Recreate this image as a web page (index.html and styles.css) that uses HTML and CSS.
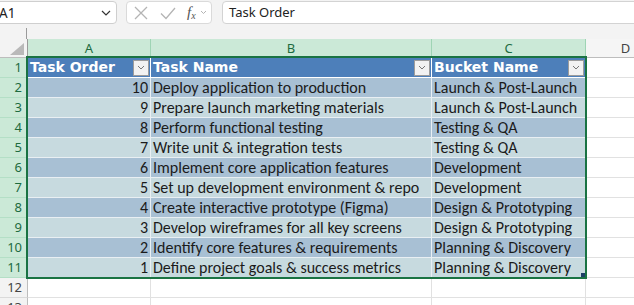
FILE: index.html
```html
<!DOCTYPE html>
<html>
<head>
<meta charset="utf-8">
<link rel="stylesheet" href="styles.css">
</head>
<body>
<div class="app">
  <div class="fbar">
    <div class="namebox">
      <span class="nb-text">A1</span>
      <svg class="nb-chev" width="10" height="6" viewBox="0 0 10 6"><path d="M1 1 L5 5 L9 1" fill="none" stroke="#333" stroke-width="1.2"/></svg>
    </div>
    <div class="fxbox">
      <svg width="16" height="16" viewBox="0 0 16 16"><path d="M2 2 L14 14 M14 2 L2 14" stroke="#b4b4b4" stroke-width="1.3" fill="none"/></svg>
      <svg width="18" height="16" viewBox="0 0 18 16"><path d="M2 8.5 L7 13.5 L16 3" stroke="#b4b4b4" stroke-width="1.3" fill="none"/></svg>
      <span class="fx">f<sub>x</sub></span>
      <svg width="7" height="5" viewBox="0 0 7 5"><path d="M1 1 L3.5 3.5 L6 1" stroke="#b4b4b4" stroke-width="1" fill="none"/></svg>
    </div>
    <div class="finput">Task Order</div>
  </div>
  <div class="strip"><div class="strip-corner"></div></div>
  <div class="sheet">
    <div class="corner"><svg width="14" height="12" viewBox="0 0 14 12"><path d="M14 0 L14 12 L0 12 Z" fill="#b9b9b9"/></svg></div>
    <div class="ch sel">A</div>
    <div class="ch sel">B</div>
    <div class="ch sel">C</div>
    <div class="ch">D</div>

    <div class="rh sel">1</div>
    <div class="c th"><span>Task Order</span><span class="dd"><svg width="8" height="5" viewBox="0 0 8 5"><path d="M1 1 L4 4 L7 1" stroke="#777" stroke-width="1" fill="none"/></svg></span></div>
    <div class="c th"><span>Task Name</span><span class="dd"><svg width="8" height="5" viewBox="0 0 8 5"><path d="M1 1 L4 4 L7 1" stroke="#777" stroke-width="1" fill="none"/></svg></span></div>
    <div class="c th"><span>Bucket Name</span><span class="dd"><svg width="8" height="5" viewBox="0 0 8 5"><path d="M1 1 L4 4 L7 1" stroke="#777" stroke-width="1" fill="none"/></svg></span></div>
    <div class="c e"></div>

    <div class="rh sel">2</div>
    <div class="c b1 num">10</div><div class="c b1">Deploy application to production</div><div class="c b1">Launch &amp; Post-Launch</div><div class="c e"></div>
    <div class="rh sel">3</div>
    <div class="c b2 num">9</div><div class="c b2">Prepare launch marketing materials</div><div class="c b2">Launch &amp; Post-Launch</div><div class="c e"></div>
    <div class="rh sel">4</div>
    <div class="c b1 num">8</div><div class="c b1">Perform functional testing</div><div class="c b1">Testing &amp; QA</div><div class="c e"></div>
    <div class="rh sel">5</div>
    <div class="c b2 num">7</div><div class="c b2">Write unit &amp; integration tests</div><div class="c b2">Testing &amp; QA</div><div class="c e"></div>
    <div class="rh sel">6</div>
    <div class="c b1 num">6</div><div class="c b1">Implement core application features</div><div class="c b1">Development</div><div class="c e"></div>
    <div class="rh sel">7</div>
    <div class="c b2 num">5</div><div class="c b2">Set up development environment &amp; repo</div><div class="c b2">Development</div><div class="c e"></div>
    <div class="rh sel">8</div>
    <div class="c b1 num">4</div><div class="c b1">Create interactive prototype (Figma)</div><div class="c b1">Design &amp; Prototyping</div><div class="c e"></div>
    <div class="rh sel">9</div>
    <div class="c b2 num">3</div><div class="c b2">Develop wireframes for all key screens</div><div class="c b2">Design &amp; Prototyping</div><div class="c e"></div>
    <div class="rh sel">10</div>
    <div class="c b1 num">2</div><div class="c b1">Identify core features &amp; requirements</div><div class="c b1">Planning &amp; Discovery</div><div class="c e"></div>
    <div class="rh sel">11</div>
    <div class="c b2 num">1</div><div class="c b2">Define project goals &amp; success metrics</div><div class="c b2">Planning &amp; Discovery</div><div class="c e"></div>

    <div class="rh">12</div>
    <div class="c e"></div><div class="c e"></div><div class="c e"></div><div class="c e"></div>
    <div class="rh">13</div>
    <div class="c e"></div><div class="c e"></div><div class="c e"></div><div class="c e"></div>

    <div class="selection"></div>
    <div class="handle"></div>
  </div>
</div>
</body>
</html>
```

FILE: styles.css
```css
html, body {
  margin: 0;
  padding: 0;
  background: #ffffff;
  overflow: hidden;
}
.app {
  width: 634px;
  height: 305px;
  overflow: hidden;
  background: #f3f3f3;
  font-family: "Segoe UI", "Noto Sans", "Liberation Sans", sans-serif;
}
.fbar {
  height: 24px;
  display: flex;
  align-items: flex-start;
  background: #f3f3f3;
}
.namebox {
  box-sizing: border-box;
  margin-left: -6px;
  margin-top: 1px;
  width: 123px;
  height: 23px;
  background: #fff;
  border: 1px solid #cfcfcf;
  border-radius: 4px;
  display: flex;
  align-items: center;
  padding-left: 4px;
  padding-right: 5px;
  font-size: 13.5px;
  color: #222;
}
.nb-text { flex: 1; }
.fxbox {
  box-sizing: border-box;
  margin-left: 9px;
  margin-top: 1px;
  width: 86px;
  height: 23px;
  background: #fff;
  border: 1px solid #dadada;
  border-radius: 4px;
  display: flex;
  align-items: center;
  gap: 4px;
  padding-left: 6px;
}
.fxbox svg:nth-child(2) { margin-left: 6px; }
.fx {
  margin-left: 6px;
  font-family: "Liberation Serif", serif;
  font-style: italic;
  font-size: 15px;
  color: #555;
  line-height: 1;
}
.fx sub { font-size: 10px; vertical-align: -2px; }
.finput {
  box-sizing: border-box;
  margin-left: 10px;
  margin-top: 1px;
  flex: 1;
  margin-right: -10px;
  height: 23px;
  background: #fff;
  border: 1px solid #d3d3d3;
  border-radius: 4px;
  font-size: 13px;
  color: #222;
  padding-left: 6px;
  line-height: 21px;
}
.strip {
  height: 15px;
  box-sizing: border-box;
  padding-top: 4px;
}
.strip-corner {
  width: 27px;
  height: 11px;
  box-sizing: border-box;
  border-right: 1px solid #9a9a9a;
}
.sheet {
  position: relative;
  display: grid;
  grid-template-columns: 28px 123px 281px 154px 80px;
  grid-template-rows: 19px repeat(13, 20px);
  background: #fff;
}
.sheet > div {
  box-sizing: border-box;
}
.corner {
  background: #f3f3f3;
  border-right: 1px solid #9a9a9a;
  border-bottom: 1px solid #bdbdbd;
  display: flex;
  align-items: flex-end;
  justify-content: flex-end;
  padding: 0 3px 2px 0;
}
.ch {
  background: #f5f5f5;
  border-right: 1px solid #dadada;
  border-bottom: 1px solid #bdbdbd;
  font-size: 13px;
  color: #444;
  text-align: center;
  line-height: 18px;
}
.ch.sel {
  background: #cbe9d7;
  color: #1d6b3f;
  border-right-color: #9ed4b4;
}
.rh {
  background: #f3f3f3;
  border-right: 1px solid #bdbdbd;
  border-bottom: 1px solid #dadada;
  font-size: 13px;
  color: #444;
  text-align: right;
  padding-right: 5px;
  line-height: 19px;
}
.rh.sel {
  background: #cbe9d7;
  color: #1d6b3f;
  border-bottom-color: #b4dfc6;
}
.c {
  border-right: 1px solid #e1e1e1;
  border-bottom: 1px solid #e1e1e1;
  font-family: "Carlito", "Lato", "Liberation Sans", sans-serif;
  font-size: 16px;
  color: #1b1b1b;
  padding-left: 2px;
  padding-right: 2px;
  line-height: 19px;
  white-space: nowrap;
  overflow: hidden;
}
.c.e { background: #fff; }
.c.th {
  background: #4d7fba;
  color: #fff;
  font-family: "DejaVu Sans", "Liberation Sans", sans-serif;
  font-size: 14px;
  font-weight: bold;
  border-right-color: #ffffff;
  border-bottom-color: #ffffff;
  display: flex;
  align-items: center;
  justify-content: space-between;
  padding-right: 1px;
}
.dd {
  box-sizing: border-box;
  width: 16px;
  height: 16px;
  background: #f2f2f2;
  border: 1px solid #9c9c9c;
  display: flex;
  align-items: center;
  justify-content: center;
}
.c.b1 {
  background: #a8c0d4;
  border-right-color: #e9eff3;
  border-bottom-color: #e9eff3;
}
.c.b2 {
  background: #c7dadf;
  border-right-color: #e9eff3;
  border-bottom-color: #e9eff3;
}
.num { text-align: right; }
.selection {
  position: absolute;
  left: 26px;
  top: 17px;
  width: 561px;
  height: 223px;
  border: 2px solid #1a7343;
  pointer-events: none;
}
.handle {
  position: absolute;
  left: 581px;
  top: 234px;
  width: 6px;
  height: 6px;
  background: #1d3f66;
  border-right: 2px solid #1a7343;
  border-bottom: 2px solid #1a7343;
}
```
